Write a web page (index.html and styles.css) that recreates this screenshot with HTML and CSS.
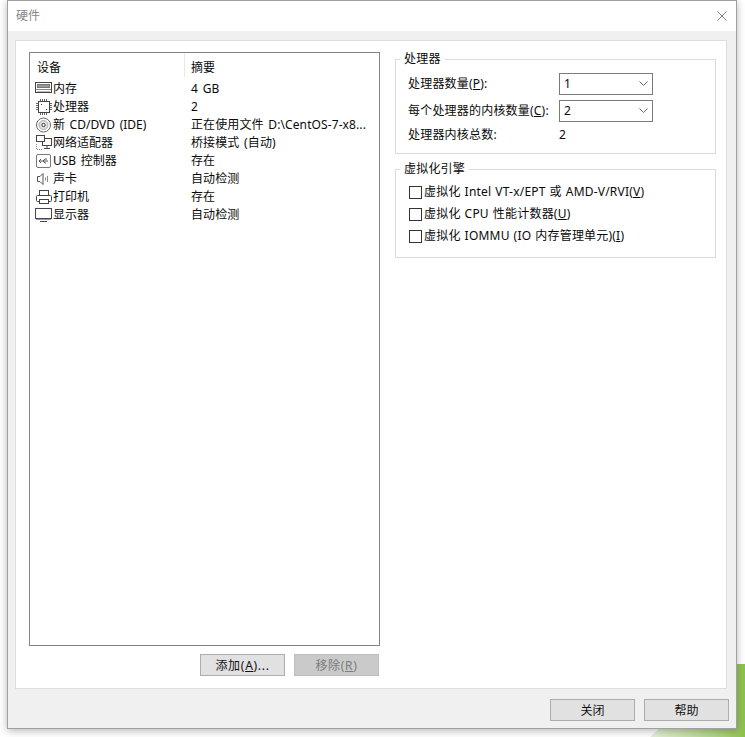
FILE: index.html
```html
<!DOCTYPE html>
<html lang="zh-CN">
<head>
<meta charset="utf-8">
<title>硬件</title>
<link rel="stylesheet" href="styles.css">
</head>
<body>
<div class="green-corner"></div>
<div class="window">
  <header class="titlebar">
    <span class="title">硬件</span>
    <svg class="close" width="10" height="10" viewBox="0 0 10 10"><path d="M.5.5l9 9M9.500.5l-9 9" stroke="#808080" fill="none"/></svg>
  </header>
  <div class="panel">
    <section class="left">
      <div class="devices">
        <div class="dev-head"><span class="col-a">设备</span><span class="col-b">摘要</span></div>
        <div class="row"><span class="col-a"><svg class="ico" width="18" height="14" viewBox="0 0 18 14"><rect x=".5" y=".5" width="16" height="10" fill="#fff" stroke="#444"/><rect x="2.500" y="2.500" width="12" height="3" fill="#999" stroke="#777"/><path d="M1 7.500h15" stroke="#888"/><path d="M2 9.500h13" stroke="#bbb"/></svg>内存</span><span class="col-b">4 GB</span></div>
        <div class="row"><span class="col-a"><svg class="ico" width="18" height="16" viewBox="0 0 18 16"><rect x="3.500" y="2.500" width="11" height="11" fill="#fff" stroke="#444"/><path d="M1 4.500h2M1 6.500h2M1 8.500h2M1 10.500h2M15 4.500h2M15 6.500h2M15 8.500h2M15 10.500h2M5.500 0v2M7.500 0v2M9.500 0v2M11.500 0v2M5.500 14v2M7.500 14v2M9.500 14v2M11.500 14v2" stroke="#666"/><path d="M6 5h1v1H6zM11 10h1v1h-1z" fill="#333"/></svg>处理器</span><span class="col-b">2</span></div>
        <div class="row"><span class="col-a"><svg class="ico" width="18" height="16" viewBox="0 0 18 16"><circle cx="8.500" cy="8" r="7" fill="#fff" stroke="#666"/><circle cx="8.500" cy="8" r="4.500" fill="#e4e4e4" stroke="#aaa"/><circle cx="8.500" cy="8" r="1.700" fill="#fff" stroke="#333"/></svg>新 CD/DVD (IDE)</span><span class="col-b">正在使用文件 D:\CentOS-7-x8...</span></div>
        <div class="row"><span class="col-a"><svg class="ico" width="18" height="16" viewBox="0 0 18 16"><path d="M1.500 9v5.500H7" stroke="#888" stroke-dasharray="1 1" fill="none"/><rect x="7.500" y="3.500" width="9" height="7" fill="#fff" stroke="#444"/><path d="M12 10.500v3M9 13.500h6" stroke="#444"/><rect x="1.500" y=".5" width="8" height="6" fill="#fff" stroke="#444"/></svg>网络适配器</span><span class="col-b">桥接模式 (自动)</span></div>
        <div class="row"><span class="col-a"><svg class="ico" width="18" height="16" viewBox="0 0 18 16"><rect x="1.500" y="1.500" width="14" height="13" rx="1.500" fill="#fff" stroke="#777"/><path d="M4 8h9M4 8l2-2M4 8l2 2M8 8l2-2h2M8 8l2 2h1" stroke="#555" fill="none"/></svg>USB 控制器</span><span class="col-b">存在</span></div>
        <div class="row"><span class="col-a"><svg class="ico" width="18" height="16" viewBox="0 0 18 16"><path d="M2.500 5.500h2.500l3-3v11l-3-3H2.500z" fill="#fff" stroke="#555"/><path d="M10.500 6.500v3M12.500 5v6" stroke="#888"/></svg>声卡</span><span class="col-b">自动检测</span></div>
        <div class="row"><span class="col-a"><svg class="ico" width="18" height="16" viewBox="0 0 18 16"><rect x="4.500" y="1.500" width="9" height="5" fill="#fff" stroke="#444"/><rect x="1.500" y="6.500" width="15" height="6" rx="1" fill="#fff" stroke="#444"/><rect x="4.500" y="10.500" width="9" height="4" fill="#fff" stroke="#444"/></svg>打印机</span><span class="col-b">存在</span></div>
        <div class="row"><span class="col-a"><svg class="ico" width="18" height="16" viewBox="0 0 18 16"><rect x=".5" y="1.500" width="16" height="10" fill="#fff" stroke="#445"/><path d="M1 12.500h15" stroke="#99a"/><path d="M5 14.500h7" stroke="#445"/></svg>显示器</span><span class="col-b">自动检测</span></div>
      </div>
      <div class="left-actions">
        <button class="btn wide"><span>添加(<u>A</u>)...</span></button>
        <button class="btn wide disabled"><span>移除(<u>R</u>)</span></button>
      </div>
    </section>
    <section class="right">
      <fieldset class="group cpu">
        <legend>处理器</legend>
        <div class="field"><label>处理器数量(<u>P</u>):</label><div class="combo"><span>1</span><svg width="9" height="5" viewBox="0 0 9 5"><path d="M.5.5l4 4 4-4" stroke="#666" fill="none"/></svg></div></div>
        <div class="field"><label>每个处理器的内核数量(<u>C</u>):</label><div class="combo"><span>2</span><svg width="9" height="5" viewBox="0 0 9 5"><path d="M.5.5l4 4 4-4" stroke="#666" fill="none"/></svg></div></div>
        <div class="field plain"><label>处理器内核总数:</label><span class="value">2</span></div>
      </fieldset>
      <fieldset class="group virt">
        <legend>虚拟化引擎</legend>
        <div class="check"><i class="box"></i><span>虚拟化 Intel VT-x/EPT 或 AMD-V/RVI(<u>V</u>)</span></div>
        <div class="check"><i class="box"></i><span>虚拟化 CPU 性能计数器(<u>U</u>)</span></div>
        <div class="check"><i class="box"></i><span>虚拟化 IOMMU (IO 内存管理单元)(<u>I</u>)</span></div>
      </fieldset>
    </section>
  </div>
  <footer class="footer">
    <button class="btn"><span>关闭</span></button>
    <button class="btn"><span>帮助</span></button>
  </footer>
</div>
</body>
</html>
```

FILE: styles.css
```css
* { box-sizing: border-box; }
html, body { margin: 0; height: 100%; }
body {
  width: 745px; height: 737px; overflow: hidden; position: relative; background: #fff;
  font: 12px/18px "Noto Sans", "Noto Sans CJK SC", sans-serif; color: #0a0a0a;
}
.green-corner {
  position: absolute; right: 0; bottom: 0; width: 95px; height: 73px;
  background: linear-gradient(to right, #e6f0d8 0, #a8cf78 80%, #8cc04e 100%);
  clip-path: polygon(85% 0, 100% 0, 100% 100%, 0 100%);
}
.window {
  position: relative; margin-left: 7px; width: 730px; height: 729px; background: #f0f0f0;
  border: 1px solid #a0a0a0;
  box-shadow: 0 2px 8px rgba(0,0,0,.28); display: flex; flex-direction: column;
}
.titlebar { height: 30px; background: #fff; flex: none; display: flex; align-items: center; justify-content: space-between; padding: 0 9px 0 8px; }
.title { color: #888; }
.panel { flex: none; width: 712px; height: 649px; margin: 9px 0 0 7px; background: #fff; border: 1px solid #dedede; display: flex; padding: 11px 10px 0 13px; gap: 15px; }
.left { width: 351px; flex: none; }
.devices { height: 594px; border: 1px solid #82828c; background: #fff; }
.dev-head { display: flex; height: 27px; }
.dev-head .col-a { border-right: 1px solid #e8e8e8; height: 24px; padding: 6px 0 0 7px; }
.dev-head .col-b { padding-top: 6px; }
.col-a { width: 155px; flex: none; }
.col-b { padding-left: 6px; white-space: nowrap; letter-spacing: .1px; }
.row { display: flex; height: 18px; align-items: center; word-spacing: 1.500px; }
.row .col-a { display: flex; align-items: center; padding-left: 5px; white-space: nowrap; }
.ico { flex: none; }
.left-actions { display: flex; justify-content: flex-end; gap: 9px; margin-top: 8px; padding-right: 1px; }
.btn { width: 85px; height: 22px; background: #e1e1e1; border: 1px solid #adadad; padding: 2px 0 0; font: inherit; color: #111; }
.btn.wide { letter-spacing: .7px; }
.btn.disabled { background: #cacaca; color: #7c7c7c; border-color: #bdbdbd; }
.right { width: 321px; flex: none; margin-top: -1px; }
.group { margin: 0; padding: 0; border: 1px solid #dcdcdc; min-width: 0; letter-spacing: .2px; word-spacing: .7px; }
.group legend { padding: 0 4px; line-height: 16px; }
.cpu { height: 103px; padding: 3px 0 0 12px; }
.cpu legend { margin-left: -8px; }
.virt { height: 97px; margin-top: 7px; padding: 4px 0 0 13px; }
.virt legend { margin-left: -9px; }
.field { display: flex; align-items: center; height: 27px; }
.field label { width: 151px; flex: none; white-space: nowrap; }
.combo { width: 94px; height: 22px; border: 1px solid #7a7a7a; display: flex; align-items: center; justify-content: space-between; padding: 0 4px; background: #fff; }
.plain { height: 22px; }
.check { display: flex; align-items: center; height: 22px; white-space: nowrap; }
.box { width: 13px; height: 13px; border: 1px solid #333; margin-right: 2px; flex: none; background: #fff; }
.footer { flex: 1; display: flex; justify-content: flex-end; gap: 9px; padding: 10px 7px 0 0; }
```
